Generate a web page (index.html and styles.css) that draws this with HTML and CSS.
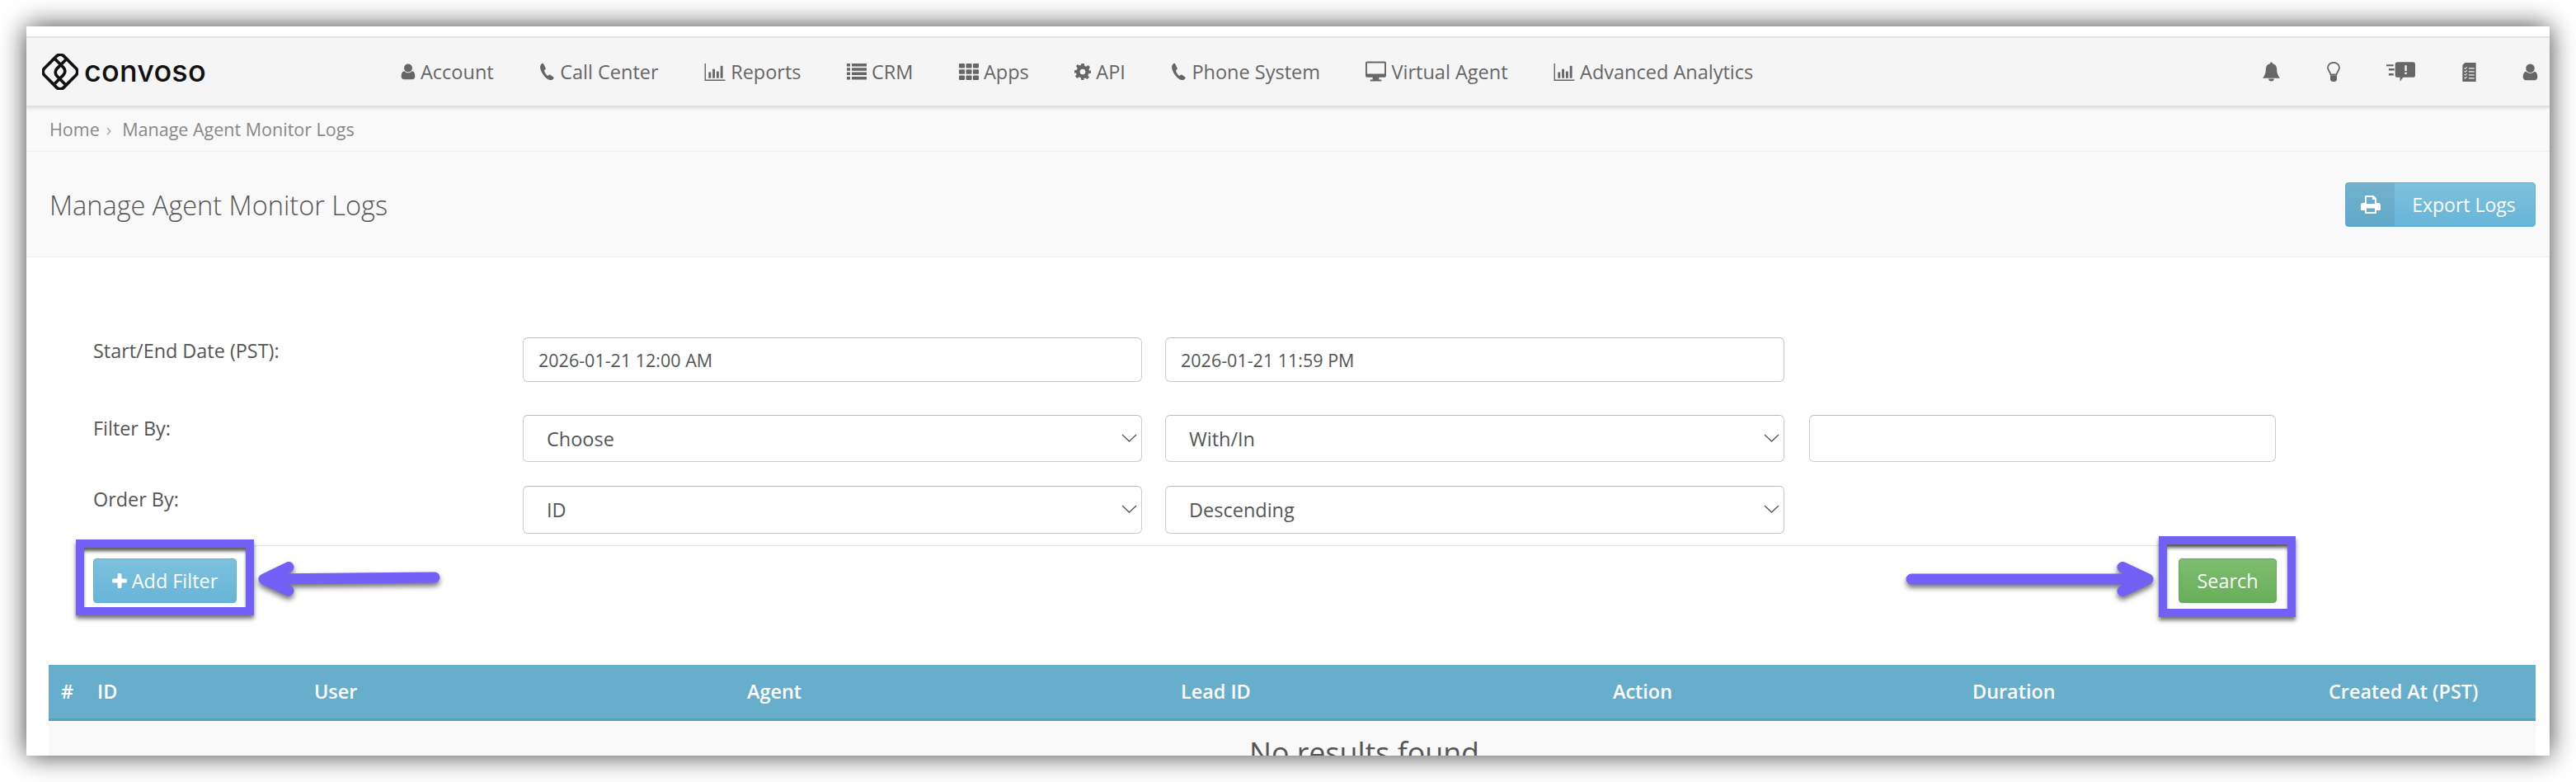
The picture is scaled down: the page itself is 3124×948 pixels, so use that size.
FILE: index.html
```html
<!DOCTYPE html>
<html lang="en">
<head>
<meta charset="utf-8">
<title>Manage Agent Monitor Logs</title>
<link rel="stylesheet" href="styles.css">
</head>
<body>
<svg class="sprite" aria-hidden="true">
  <symbol id="i-user" viewBox="0 0 20 24"><circle cx="10" cy="6.5" r="6"/><path d="M0 18.500c0-4 1.500-7.500 4.500-7.500 1.500 1.500 3.300 2.500 5.500 2.500s4-1 5.500-2.500c3 0 4.500 3.500 4.500 7.500 0 3-1.800 4.500-4 4.500H4c-2.200 0-4-1.500-4-4.500z"/></symbol>
  <symbol id="i-phone" viewBox="0 0 20 24"><path d="M5 1l3 6c.3.7.2 1.200-.3 1.700L6 10.300c.8 2.500 2.500 5.400 4.800 7.200l1.800-1.300c.6-.4 1.200-.4 1.700 0l4.100 3c.6.400.7 1 .3 1.600-1 1.600-2.700 2.600-4.700 2.100C8 21.500 2.500 14 1 7.500.5 4.500 1.300 2.500 3.300 1c.7-.4 1.300-.4 1.700 0z"/></symbol>
  <symbol id="i-chart" viewBox="0 0 26 24"><path d="M0 1h1.500v20.500H26V23H0z"/><rect x="5" y="12" width="3" height="7.500"/><rect x="10" y="8" width="3" height="11.500"/><rect x="15" y="11" width="3" height="8.500"/><rect x="20" y="4" width="3" height="15.500"/></symbol>
  <symbol id="i-list" viewBox="0 0 24 20"><path d="M0 0h4v3.500H0zM6 0h18v3.500H6zM0 5.300h4v3.500H0zM6 5.300h18v3.500H6zM0 10.600h4v3.500H0zM6 10.600h18v3.500H6zM0 16h4v3.500H0zM6 16h18v3.500H6z"/></symbol>
  <symbol id="i-grid" viewBox="0 0 24 20"><rect x="0" width="7" height="5.500" rx="1"/><rect x="8.500" width="7" height="5.500" rx="1"/><rect x="17" width="7" height="5.500" rx="1"/><rect x="0" y="7.200" width="7" height="5.500" rx="1"/><rect x="8.500" y="7.200" width="7" height="5.500" rx="1"/><rect x="17" y="7.200" width="7" height="5.500" rx="1"/><rect x="0" y="14.500" width="7" height="5.500" rx="1"/><rect x="8.500" y="14.500" width="7" height="5.500" rx="1"/><rect x="17" y="14.500" width="7" height="5.500" rx="1"/></symbol>
  <symbol id="i-cog" viewBox="0 0 24 24"><path fill-rule="evenodd" d="M10 0h4l.7 3.400 2.300 1 3-1.900 2.800 2.800-1.900 3 1 2.300L24 10v4l-3.400.7-1 2.300 1.900 3-2.800 2.800-3-1.900-2.300 1L14 24h-4l-.7-3.400-2.300-1-3 1.900-2.800-2.800 1.900-3-1-2.300L0 14v-4l3.400-.7 1-2.300-1.900-3L4.300 1.200l3 1.900 2.300-1zM12 8a4 4 0 1 0 0 8 4 4 0 0 0 0-8z"/></symbol>
  <symbol id="i-desk" viewBox="0 0 26 26"><path fill-rule="evenodd" d="M2 0h22a2 2 0 0 1 2 2v16a2 2 0 0 1-2 2h-7v3h3v2H6v-2h3v-3H2a2 2 0 0 1-2-2V2a2 2 0 0 1 2-2zM2 2v13.500h22V2z"/></symbol>
  <symbol id="i-bell" viewBox="0 0 22 24"><path d="M11 0c1 0 1.700.7 1.700 1.700 3.500.7 5.300 3.500 5.300 7 0 5 1 8 4 11.300H0c3-3.300 4-6.300 4-11.300 0-3.500 1.800-6.300 5.300-7C9.300.7 10 0 11 0z"/><path d="M7.500 21h7a3.500 3 0 0 1-7 0z"/></symbol>
  <symbol id="i-bulb" viewBox="0 0 16 24"><path fill="none" stroke="currentColor" stroke-width="1.800" d="M4.500 15.500C4 12 1 10.500 1 7a7 6.200 0 0 1 14 0c0 3.500-3 5-3.500 8.500z"/><path d="M4 16.500h8V21a4 3 0 0 1-8 0z"/></symbol>
  <symbol id="i-note" viewBox="0 0 36 24"><path d="M0 3h9v2H0zM3 8h7v2.500H3zM3 14h6v2.500H3z"/><path fill-rule="evenodd" d="M14 0h19a3 3 0 0 1 3 3v13a3 3 0 0 1-3 3H21l-4 5v-5h-3a3 3 0 0 1-3-3V3a3 3 0 0 1 3-3zM23 4v7h2.500V4zM23 12.500V15h2.500v-2.500z"/></symbol>
  <symbol id="i-doc" viewBox="0 0 17 24"><path fill-rule="evenodd" d="M3 0h14v24H0V3zM8 6.500v1.300h7V6.500zM8 10.700V12h7v-1.300zM8 14.800v1.300h7v-1.300zM8 19v1.300h7V19zM2 7l1.500 1.500L6 5.800l-.7-.6-1.800 1.900-.8-.8zM2 11l1.500 1.500L6 9.800l-.7-.6-1.800 1.900-.8-.8zM2 15l1.500 1.500L6 13.800l-.7-.6-1.800 1.900-.8-.8zM2 19l1.500 1.500L6 17.800l-.7-.6-1.800 1.900-.8-.8z"/></symbol>
  <symbol id="i-print" viewBox="0 0 24 22"><path fill-rule="evenodd" d="M5 0h10.500L19 3.500V9h2a3 3 0 0 1 3 3v6h-5v4H5v-4H0v-6a3 3 0 0 1 3-3h2zM7 2v8h10V5h-3V2zM7 15.500V20h10v-4.500z"/></symbol>
  <symbol id="i-plus" viewBox="0 0 18 18"><path d="M6.500 1.500A1.500 1.500 0 0 1 8 0h2a1.500 1.500 0 0 1 1.500 1.500v5h5A1.500 1.500 0 0 1 18 8v2a1.500 1.500 0 0 1-1.500 1.500h-5v5A1.500 1.500 0 0 1 10 18H8a1.500 1.500 0 0 1-1.500-1.500v-5h-5A1.500 1.500 0 0 1 0 10V8a1.500 1.500 0 0 1 1.500-1.500h5z"/></symbol>
  <symbol id="i-chev" viewBox="0 0 19 10"><path fill="none" stroke="currentColor" stroke-width="1.300" d="M1 1l8.500 8L18 1"/></symbol>
</svg>

<div class="window">
  <div class="top-strip"></div>

  <header class="nav">
    <a class="logo">
      <svg class="logo-mark" viewBox="0 0 44 44"><g transform="rotate(45 22 22)" fill="none" stroke="#111" stroke-width="3.700" stroke-linejoin="round" stroke-linecap="butt"><rect x="5.500" y="5.500" width="33" height="33" rx="6"/><path d="M7 15.500h14a6.500 6.500 0 0 1 6.500 6.500v15"/><path d="M37 28.500H23a6.500 6.500 0 0 1-6.500-6.500V7"/></g></svg>
      <span class="logo-text">convoso</span>
    </a>
    <nav class="menu">
      <a class="menu-item"><svg class="ic ic-user"><use href="#i-user"/></svg>Account</a>
      <a class="menu-item"><svg class="ic ic-phone"><use href="#i-phone"/></svg>Call Center</a>
      <a class="menu-item"><svg class="ic ic-chart"><use href="#i-chart"/></svg>Reports</a>
      <a class="menu-item"><svg class="ic ic-list"><use href="#i-list"/></svg>CRM</a>
      <a class="menu-item"><svg class="ic ic-list"><use href="#i-grid"/></svg>Apps</a>
      <a class="menu-item"><svg class="ic ic-cog"><use href="#i-cog"/></svg>API</a>
      <a class="menu-item"><svg class="ic ic-phone"><use href="#i-phone"/></svg>Phone System</a>
      <a class="menu-item"><svg class="ic ic-desk"><use href="#i-desk"/></svg>Virtual Agent</a>
      <a class="menu-item"><svg class="ic ic-chart"><use href="#i-chart"/></svg>Advanced Analytics</a>
    </nav>
    <div class="tools">
      <svg class="tool tool-bell"><use href="#i-bell"/></svg>
      <svg class="tool tool-bulb"><use href="#i-bulb"/></svg>
      <svg class="tool tool-note"><use href="#i-note"/></svg>
      <svg class="tool tool-doc"><use href="#i-doc"/></svg>
      <svg class="tool tool-user"><use href="#i-user"/></svg>
    </div>
  </header>

  <div class="crumbs"><span>Home</span><span class="crumb-sep">›</span><span>Manage Agent Monitor Logs</span></div>

  <div class="title-bar">
    <h1 class="title">Manage Agent Monitor Logs</h1>
    <button class="btn-export" type="button"><span class="export-icon"><svg class="ic-print"><use href="#i-print"/></svg></span><span class="export-label">Export Logs</span></button>
  </div>

  <form class="filters">
    <div class="row row-date">
      <label class="row-label">Start/End Date (PST):</label>
      <input class="field field-wide field-date" value="2026-01-21 12:00 AM">
      <input class="field field-wide field-date" value="2026-01-21 11:59 PM">
    </div>
    <div class="row row-filter">
      <label class="row-label">Filter By:</label>
      <div class="select"><select class="field field-wide"><option>Choose</option></select><svg class="chev"><use href="#i-chev"/></svg></div>
      <div class="select"><select class="field field-wide"><option>With/In</option></select><svg class="chev"><use href="#i-chev"/></svg></div>
      <input class="field field-value">
    </div>
    <div class="row row-order">
      <label class="row-label">Order By:</label>
      <div class="select"><select class="field field-wide"><option>ID</option></select><svg class="chev"><use href="#i-chev"/></svg></div>
      <div class="select"><select class="field field-wide"><option>Descending</option></select><svg class="chev"><use href="#i-chev"/></svg></div>
    </div>
    <div class="actions">
      <button class="btn btn-blue" type="button"><svg class="ic-plus"><use href="#i-plus"/></svg>Add Filter</button>
      <button class="btn btn-green" type="button">Search</button>
    </div>
  </form>

  <table class="logs">
    <colgroup><col class="c-num"><col class="c-id"><col class="c-user"><col class="c-agent"><col class="c-lead"><col class="c-action"><col class="c-dur"><col class="c-date"></colgroup>
    <thead>
      <tr><th>#</th><th>ID</th><th>User</th><th>Agent</th><th>Lead ID</th><th>Action</th><th>Duration</th><th>Created At (PST)</th></tr>
    </thead>
    <tbody>
      <tr><td class="empty" colspan="8">No results found</td></tr>
    </tbody>
  </table>

  <div class="mark mark-add"></div>
  <div class="mark mark-search"></div>
  <svg class="arrow arrow-left" viewBox="0 0 240 60"><path d="M219 21L16 23M42 8.500L12 23l30 14" fill="none" stroke="#7360f6" stroke-width="13" stroke-linecap="round" stroke-linejoin="round"/></svg>
  <svg class="arrow arrow-right" viewBox="0 0 320 60"><path d="M14 24H296M270 9.500l31 14.500-31 14.500" fill="none" stroke="#7360f6" stroke-width="13" stroke-linecap="round" stroke-linejoin="round"/></svg>
</div>
</body>
</html>
```
FILE: styles.css
```css
* { box-sizing: border-box; }
html, body { height: 948px; overflow: hidden; }
body {
  margin: 0;
  padding: 32px 32px 0;
  background: #fff;
  font-family: "Open Sans", "Liberation Sans", sans-serif;
  color: #555;
}
.sprite { display: none; }
.window {
  position: relative;
  width: 3060px;
  height: 884px;
  overflow: hidden;
  background: #fff;
}
body::before {
  content: "";
  position: absolute;
  left: 32px;
  top: 32px;
  width: 3060px;
  height: 884px;
  box-shadow: 0 0 30px rgba(0, 0, 0, .75);
}
.top-strip { height: 14px; border-bottom: 2px solid #e4e4e4; }

.nav {
  position: relative;
  z-index: 1;
  display: flex;
  align-items: center;
  height: 83px;
  background: #f5f5f5;
  border-bottom: 1px solid #ddd;
  box-shadow: 0 2px 4px rgba(0, 0, 0, .12);
  padding-left: 19px;
}
.logo { display: flex; align-items: center; width: 435px; }
.logo-mark { width: 44px; height: 44px; flex: none; margin-right: 7px; }
.logo-text { font-family: "Inter", sans-serif; font-size: 36px; font-weight: 500; letter-spacing: .2px; color: #111; line-height: 1; margin-top: -2px; }
.menu { display: flex; gap: 55.5px; flex: 1; }
.menu-item { display: flex; align-items: center; gap: 6px; font-size: 23.5px; line-height: 32px; color: #666; white-space: nowrap; }
.ic { fill: #666; flex: none; }
.ic-user { width: 18px; height: 20px; }
.ic-phone { width: 19px; height: 22px; }
.ic-chart { width: 26px; height: 23px; }
.ic-list { width: 24px; height: 20px; }
.ic-cog { width: 20px; height: 20px; }
.ic-desk { width: 25px; height: 26px; }

.tools { display: flex; align-items: center; gap: 56.5px; padding-right: 14px; color: #666; }
.tool { fill: #666; flex: none; }
.tool-bell { width: 21px; height: 24px; }
.tool-bulb { width: 16px; height: 24px; }
.tool-note { width: 35px; height: 24px; }
.tool-doc { width: 17px; height: 23px; }
.tool-user { width: 19px; height: 21px; }

.crumbs {
  display: flex;
  align-items: center;
  height: 55px;
  padding-left: 28px;
  background: #f9f9f9;
  border-bottom: 1px solid #eee;
  font-size: 21.5px;
  color: #888;
}
.crumb-sep { margin: 0 13px 0 8px; color: #aaa; }

.title-bar {
  display: flex;
  align-items: center;
  justify-content: space-between;
  height: 128px;
  padding: 0 17px 0 28px;
  background: #f9f9f9;
  border-bottom: 1px solid #eee;
}
.title { margin: 0; padding-top: 2px; font-size: 32.5px; font-weight: 300; color: #555; }
.btn-export {
  display: flex;
  align-items: stretch;
  width: 231px;
  height: 54px;
  padding: 0;
  border: 1px solid #5fb0d3;
  border-radius: 4px;
  background: linear-gradient(#7cc1dd, #67b5d8);
  color: #fff;
  font: 400 23px "Open Sans", sans-serif;
  overflow: hidden;
}
.export-icon { display: flex; align-items: center; justify-content: center; width: 59px; background: rgba(0, 0, 0, .07); }
.ic-print { width: 24px; height: 22px; fill: #fff; }
.export-label { flex: 1; align-self: center; padding-right: 2px; text-align: center; }

.filters { width: 2729px; padding: 97px 0 0 81px; }
.row { display: flex; gap: 28px; }
.row-date { height: 54px; margin-bottom: 40px; }
.row-filter { height: 57px; margin-bottom: 29px; }
.row-order { height: 58px; }
.row-label { flex: none; width: 493px; padding-top: 2px; font-size: 23.4px; line-height: 28px; color: #555; }
.field {
  height: 100%;
  border: 1px solid #ccc;
  border-top-color: #bbb;
  border-radius: 6px;
  background: #fff;
  color: #555;
  font-family: "Open Sans", sans-serif;
  outline: none;
}
.field-wide { width: 751px; }
.field-date { padding: 0 0 0 18px; font-size: 21.5px; }
.field-value { width: 566px; margin-left: 2px; }
.select { position: relative; }
.select select { appearance: none; padding: 0 0 0 28px; font-size: 23.5px; display: block; }
.chev { position: absolute; right: 6px; top: 50%; width: 19px; height: 10px; margin-top: -6px; color: #555; }

.actions {
  display: flex;
  justify-content: space-between;
  margin-top: 14px;
  padding-top: 15px;
  border-top: 1px solid #e5e5e5;
}
.btn {
  display: flex;
  align-items: center;
  justify-content: center;
  height: 54px;
  border-radius: 4px;
  color: #fff;
  font: 400 23.4px "Open Sans", sans-serif;
  padding: 0;
}
.btn-blue { width: 174px; border: 1px solid #5fb0d3; background: linear-gradient(#7cc1dd, #67b5d8); }
.btn-green { width: 119px; border: 1px solid #64a957; background: linear-gradient(#7dbd6f, #69ae5b); }
.ic-plus { width: 18px; height: 18px; fill: #fff; margin-right: 6px; }

.logs {
  width: 3016px;
  margin: 75px 0 0 27px;
  border-collapse: collapse;
  table-layout: fixed;
}
.c-num { width: 44px; }
.c-id { width: 263px; }
.c-user { width: 525px; }
.c-agent { width: 526px; }
.c-lead { width: 524px; }
.c-action { width: 436px; }
.c-dur { width: 432px; }
.c-date { width: 266px; }
.logs th {
  height: 66px;
  padding: 0 0 0 15px;
  background: #67aecd;
  border-bottom: 3px solid #5a9fbd;
  color: #fff;
  font-size: 23.4px;
  font-weight: 600;
  text-align: left;
}
.logs td { background: #f9f9f9; }
.empty { height: 90px; padding: 14px 0 0 175px; font-size: 35.8px; color: #555; text-align: center; vertical-align: top; }

.mark {
  position: absolute;
  border-style: solid;
  border-color: #7360f6;
  box-shadow: 0 4px 5px rgba(0, 0, 0, .55), inset 0 5px 4px -1px rgba(0, 0, 0, .65);
}
.mark-add { left: 60px; top: 622px; width: 216px; height: 92px; border-width: 10px; }
.mark-search { left: 2586px; top: 618px; width: 166px; height: 98px; border-width: 10px; }
.arrow { position: absolute; overflow: visible; filter: drop-shadow(0 4px 3px rgba(0, 0, 0, .55)); }
.arrow-left { left: 276px; top: 647px; width: 240px; height: 60px; }
.arrow-right { left: 2272px; top: 646px; width: 320px; height: 60px; }
```
